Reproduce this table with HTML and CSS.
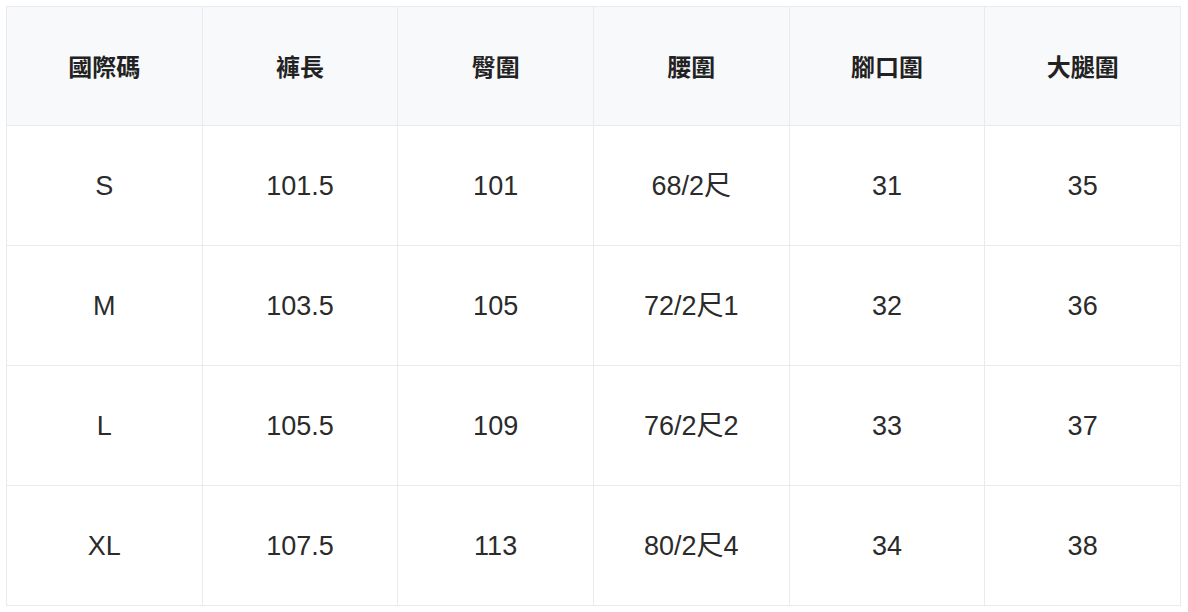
FILE: index.html
```html
<!DOCTYPE html>
<html lang="zh-Hant">
<head>
<meta charset="utf-8">
<link rel="stylesheet" href="styles.css">
</head>
<body>
<table class="size-table">
  <thead>
    <tr class="head-row">
      <th>國際碼</th><th>褲長</th><th>臀圍</th><th>腰圍</th><th>腳口圍</th><th>大腿圍</th>
    </tr>
  </thead>
  <tbody>
    <tr><td>S</td><td>101.5</td><td>101</td><td>68/2尺</td><td>31</td><td>35</td></tr>
    <tr><td>M</td><td>103.5</td><td>105</td><td>72/2尺1</td><td>32</td><td>36</td></tr>
    <tr><td>L</td><td>105.5</td><td>109</td><td>76/2尺2</td><td>33</td><td>37</td></tr>
    <tr><td>XL</td><td>107.5</td><td>113</td><td>80/2尺4</td><td>34</td><td>38</td></tr>
  </tbody>
</table>
</body>
</html>
```
FILE: styles.css
```css
html, body {
  margin: 0;
  padding: 0;
  background: #ffffff;
}
body {
  padding: 6px 0 0 6px;
  font-family: "Liberation Sans", "Noto Sans CJK TC", sans-serif;
}
.size-table {
  width: 1175px;
  border-collapse: collapse;
  table-layout: fixed;
}
.size-table th,
.size-table td {
  border: 1px solid #e9eaed;
  text-align: center;
  vertical-align: middle;
  padding: 0;
}
.size-table th {
  height: 118px;
  background: #f8f9fb;
  font-family: "Noto Sans CJK TC", sans-serif;
  font-weight: 700;
  font-size: 24px;
  line-height: 32px;
  color: #222222;
}
.size-table td {
  height: 119px;
  font-size: 27px;
  line-height: 32px;
  color: #2b2b2b;
}
```
